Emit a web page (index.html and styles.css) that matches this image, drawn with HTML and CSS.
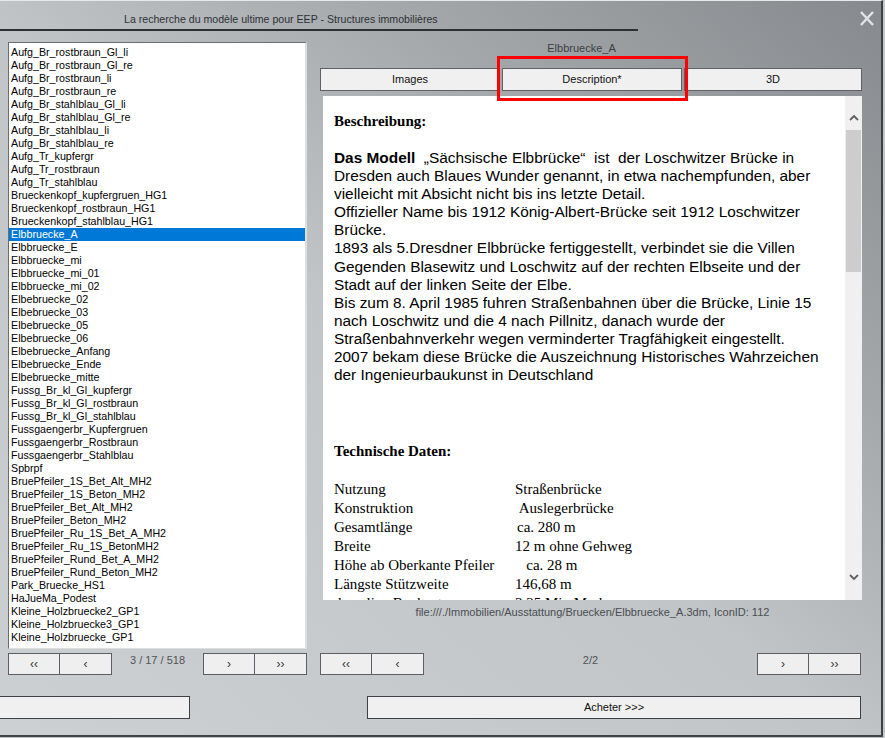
FILE: index.html
```html
<!DOCTYPE html>
<html>
<head>
<meta charset="utf-8">
<link rel="stylesheet" href="styles.css">
</head>
<body>
<div class="window">
  <div class="titlebar">
    <div class="title">La recherche du modèle ultime pour EEP - Structures immobilières</div>
    <svg class="close" width="14" height="15" viewBox="0 0 14 15"><path d="M1 1 L13 14 M13 1 L1 14" stroke="#e2e4e6" stroke-width="2.4" fill="none"/></svg>
  </div>
  <div class="main">
    <div class="left">
      <ul class="listbox">
        <li>Aufg_Br_rostbraun_Gl_li</li>
        <li>Aufg_Br_rostbraun_Gl_re</li>
        <li>Aufg_Br_rostbraun_li</li>
        <li>Aufg_Br_rostbraun_re</li>
        <li>Aufg_Br_stahlblau_Gl_li</li>
        <li>Aufg_Br_stahlblau_Gl_re</li>
        <li>Aufg_Br_stahlblau_li</li>
        <li>Aufg_Br_stahlblau_re</li>
        <li>Aufg_Tr_kupfergr</li>
        <li>Aufg_Tr_rostbraun</li>
        <li>Aufg_Tr_stahlblau</li>
        <li>Brueckenkopf_kupfergruen_HG1</li>
        <li>Brueckenkopf_rostbraun_HG1</li>
        <li>Brueckenkopf_stahlblau_HG1</li>
        <li class="selected">Elbbruecke_A</li>
        <li>Elbbruecke_E</li>
        <li>Elbbruecke_mi</li>
        <li>Elbbruecke_mi_01</li>
        <li>Elbbruecke_mi_02</li>
        <li>Elbebruecke_02</li>
        <li>Elbebruecke_03</li>
        <li>Elbebruecke_05</li>
        <li>Elbebruecke_06</li>
        <li>Elbebruecke_Anfang</li>
        <li>Elbebruecke_Ende</li>
        <li>Elbebruecke_mitte</li>
        <li>Fussg_Br_kl_Gl_kupfergr</li>
        <li>Fussg_Br_kl_Gl_rostbraun</li>
        <li>Fussg_Br_kl_Gl_stahlblau</li>
        <li>Fussgaengerbr_Kupfergruen</li>
        <li>Fussgaengerbr_Rostbraun</li>
        <li>Fussgaengerbr_Stahlblau</li>
        <li>Spbrpf</li>
        <li>BruePfeiler_1S_Bet_Alt_MH2</li>
        <li>BruePfeiler_1S_Beton_MH2</li>
        <li>BruePfeiler_Bet_Alt_MH2</li>
        <li>BruePfeiler_Beton_MH2</li>
        <li>BruePfeiler_Ru_1S_Bet_A_MH2</li>
        <li>BruePfeiler_Ru_1S_BetonMH2</li>
        <li>BruePfeiler_Rund_Bet_A_MH2</li>
        <li>BruePfeiler_Rund_Beton_MH2</li>
        <li>Park_Bruecke_HS1</li>
        <li>HaJueMa_Podest</li>
        <li>Kleine_Holzbruecke2_GP1</li>
        <li>Kleine_Holzbruecke3_GP1</li>
        <li>Kleine_Holzbruecke_GP1</li>
      </ul>
      <div class="nav">
        <div class="btn">&lsaquo;&lsaquo;</div>
        <div class="btn joined">&lsaquo;</div>
        <div class="count">3 / 17 / 518</div>
        <div class="btn">&rsaquo;</div>
        <div class="btn joined">&rsaquo;&rsaquo;</div>
      </div>
    </div>
    <div class="right">
      <div class="model-name">Elbbruecke_A</div>
      <div class="tabs">
        <div class="tab">Images</div>
        <div class="tab">Description*</div>
        <div class="tab">3D</div>
      </div>
      <div class="content">
        <div class="text">
          <div class="heading">Beschreibung:</div>
          <p class="desc"><b>Das Modell</b>&nbsp; „Sächsische Elbbrücke“&nbsp; ist&nbsp; der Loschwitzer Brücke in<br>Dresden auch Blaues Wunder genannt, in etwa nachempfunden, aber<br>vielleicht mit Absicht nicht bis ins letzte Detail.<br>Offizieller Name bis 1912 König-Albert-Brücke seit 1912 Loschwitzer<br>Brücke.<br>1893 als 5.Dresdner Elbbrücke fertiggestellt, verbindet sie die Villen<br>Gegenden Blasewitz und Loschwitz auf der rechten Elbseite und der<br>Stadt auf der linken Seite der Elbe.<br>Bis zum 8. April 1985 fuhren Straßenbahnen über die Brücke, Linie 15<br>nach Loschwitz und die 4 nach Pillnitz, danach wurde der<br>Straßenbahnverkehr wegen verminderter Tragfähigkeit eingestellt.<br>2007 bekam diese Brücke die Auszeichnung Historisches Wahrzeichen<br>der Ingenieurbaukunst in Deutschland</p>
          <div class="heading tech">Technische Daten:</div>
          <div class="specs">
            <span>Nutzung</span><span>Straßenbrücke</span>
            <span>Konstruktion</span><span>&nbsp;Auslegerbrücke</span>
            <span>Gesamtlänge</span><span class="nudge">ca. 280 m</span>
            <span>Breite</span><span>12 m ohne Gehweg</span>
            <span>Höhe ab Oberkante Pfeiler</span><span>&nbsp;&nbsp;&nbsp;ca. 28 m</span>
            <span>Längste Stützweite</span><span>146,68 m</span>
            <span>damalige Baukosten</span><span>3,25 Mio Mark</span>
          </div>
        </div>
        <div class="scrollbar">
          <svg class="arrow-up" width="10" height="7" viewBox="0 0 10 7"><path d="M1 6 L5 2 L9 6" stroke="#606060" stroke-width="1.8" fill="none"/></svg>
          <div class="thumb"></div>
          <div class="track-rest"></div>
          <svg class="arrow-down" width="10" height="7" viewBox="0 0 10 7"><path d="M1 1 L5 5 L9 1" stroke="#606060" stroke-width="1.8" fill="none"/></svg>
        </div>
      </div>
      <div class="path">file:///./Immobilien/Ausstattung/Bruecken/Elbbruecke_A.3dm, IconID: 112</div>
      <div class="nav">
        <div class="btn">&lsaquo;&lsaquo;</div>
        <div class="btn joined">&lsaquo;</div>
        <div class="count page">2/2</div>
        <div class="btn">&rsaquo;</div>
        <div class="btn joined">&rsaquo;&rsaquo;</div>
      </div>
    </div>
  </div>
  <div class="bottom">
    <div class="wide cancel"></div>
    <div class="wide buy">Acheter &gt;&gt;&gt;</div>
  </div>
  <div class="highlight"></div>
</div>
</body>
</html>
```

FILE: styles.css
```css
* { box-sizing: border-box; }
html, body { margin: 0; padding: 0; }
body {
  width: 885px;
  height: 738px;
  overflow: hidden;
  background: #c3c7ca;
  font-family: "Liberation Sans", Arial, sans-serif;
  font-size: 11px;
  color: #000;
}
.window {
  position: relative;
  width: 883px;
  height: 737px;
  border-top: 1px solid #e6e8ea;
  border-right: 2px solid #3e4246;
  border-bottom: 2px solid #3e4246;
  background: linear-gradient(to bottom left, #868a8e 0%, #a4a8ab 28%, #c1c5c8 52%, #ccd0d3 100%);
  display: flex;
  flex-direction: column;
}
.titlebar {
  height: 41px;
  display: flex;
  align-items: flex-start;
}
.title {
  width: 638px;
  height: 30px;
  padding: 12px 0 0 124px;
  line-height: 13px;
  font-size: 10.6px;
  color: #2e3134;
  border-bottom: 2px solid #2c3034;
}
.close {
  margin: 10px 7px 0 auto;
}
.main {
  display: flex;
  padding-left: 8px;
}
.left {
  width: 299px;
  display: flex;
  flex-direction: column;
}
.listbox {
  list-style: none;
  margin: 0;
  height: 607px;
  padding: 3px 0 0 0;
  background: #fff;
  border-top: 1px solid #6a6d70;
  border-left: 1px solid #6a6d70;
  border-right: 2px solid #dcdee0;
  border-bottom: 1px solid #dcdee0;
  overflow: hidden;
  font-size: 10.7px;
}
.listbox li {
  height: 13px;
  line-height: 13px;
  padding-left: 2px;
  white-space: nowrap;
}
.listbox li.selected {
  background: #0078d7;
  color: #fff;
}
.nav {
  display: flex;
  height: 22px;
  margin-top: 4px;
}
.btn {
  width: 52px;
  height: 22px;
  background: #efefef;
  border: 1px solid #5b5e62;
  text-align: center;
  line-height: 20px;
  font-size: 12px;
  color: #333;
}
.btn.joined { margin-left: -1px; width: 53px; }
.count {
  flex: 1;
  text-align: center;
  line-height: 13px;
  padding-top: 1px;
  color: #505356;
}
.right {
  margin-left: 13px;
  width: 542px;
  display: flex;
  flex-direction: column;
}
.model-name {
  height: 13px;
  line-height: 13px;
  text-align: center;
  padding-right: 19px;
  color: #3c3f42;
}
.tabs {
  margin-top: 13px;
  display: grid;
  grid-template-columns: 180px 180px 178px;
  gap: 2px;
  height: 23px;
}
.tab {
  background: #f0f0f0;
  border: 1px solid #5e6165;
  text-align: center;
  line-height: 21px;
  color: #111;
}
.content {
  margin: 5px 0 0 3px;
  height: 504px;
  display: flex;
  background: #fff;
}
.text {
  flex: 1;
  overflow: hidden;
  padding: 16px 0 0 11px;
  white-space: nowrap;
}
.heading {
  font-family: "Liberation Serif", "Times New Roman", serif;
  font-weight: bold;
  font-size: 15px;
  line-height: 19px;
}
.desc {
  margin: 18px 0 0 0;
  font-family: "Liberation Sans", Arial, sans-serif;
  font-size: 15.4px;
  line-height: 18.1px;
}
.tech { margin-top: 58px; }
.specs {
  margin-top: 19px;
  display: grid;
  grid-template-columns: 181px auto;
  font-family: "Liberation Serif", "Times New Roman", serif;
  font-size: 15px;
  line-height: 19px;
}
.nudge { padding-left: 2px; }
.scrollbar {
  width: 17px;
  background: #f0f0f0;
  display: flex;
  flex-direction: column;
  align-items: center;
}
.arrow-up { margin-top: 18px; }
.thumb {
  margin-top: 9px;
  width: 15px;
  height: 142px;
  background: #cdcdcd;
}
.track-rest { flex: 1; }
.arrow-down { margin-bottom: 19px; }
.path {
  margin: 6px 0 0 3px;
  line-height: 12px;
  text-align: center;
  color: #4a4d51;
}
.right .nav { margin-top: 35px; width: 541px; }
.bottom {
  display: flex;
  margin-top: 21px;
  height: 23px;
}
.wide {
  height: 23px;
  background: #f0f0f0;
  border: 1px solid #3d4044;
  text-align: center;
  line-height: 21px;
  color: #111;
}
.cancel { width: 190px; border-left: none; }
.buy { margin-left: 177px; width: 494px; }
.highlight {
  position: absolute;
  left: 497px;
  top: 55px;
  width: 191px;
  height: 45px;
  border: 3px solid #ff0000;
}
```
